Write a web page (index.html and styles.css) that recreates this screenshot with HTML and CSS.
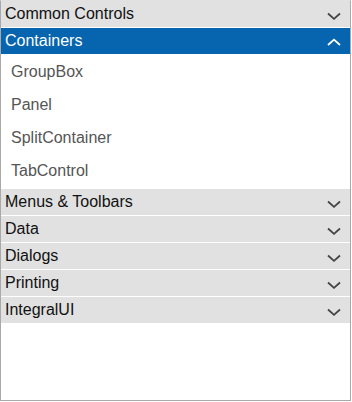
FILE: index.html
```html
<!DOCTYPE html>
<html>
<head>
<meta charset="utf-8">
<link rel="stylesheet" href="styles.css">
</head>
<body>
<div class="panel">
  <div class="group">
    <div class="header"><span>Common Controls</span><svg class="chev" width="16" height="14" viewBox="0 0 16 14"><polyline points="2,6.5 8,11.8 14,6.5"/></svg></div>
  </div>
  <div class="group open">
    <div class="header"><span>Containers</span><svg class="chev" width="16" height="14" viewBox="0 0 16 14"><polyline points="2,11 8,5.7 14,11"/></svg></div>
    <div class="content">
      <div class="item">GroupBox</div>
      <div class="item">Panel</div>
      <div class="item">SplitContainer</div>
      <div class="item">TabControl</div>
    </div>
  </div>
  <div class="group">
    <div class="header"><span>Menus &amp; Toolbars</span><svg class="chev" width="16" height="14" viewBox="0 0 16 14"><polyline points="2,6.5 8,11.8 14,6.5"/></svg></div>
  </div>
  <div class="group">
    <div class="header"><span>Data</span><svg class="chev" width="16" height="14" viewBox="0 0 16 14"><polyline points="2,6.5 8,11.8 14,6.5"/></svg></div>
  </div>
  <div class="group">
    <div class="header"><span>Dialogs</span><svg class="chev" width="16" height="14" viewBox="0 0 16 14"><polyline points="2,6.5 8,11.8 14,6.5"/></svg></div>
  </div>
  <div class="group">
    <div class="header"><span>Printing</span><svg class="chev" width="16" height="14" viewBox="0 0 16 14"><polyline points="2,6.5 8,11.8 14,6.5"/></svg></div>
  </div>
  <div class="group">
    <div class="header"><span>IntegralUI</span><svg class="chev" width="16" height="14" viewBox="0 0 16 14"><polyline points="2,6.5 8,11.8 14,6.5"/></svg></div>
  </div>
</div>
</body>
</html>
```

FILE: styles.css
```css
html, body {
  margin: 0;
  padding: 0;
  background: #ffffff;
}

.panel {
  width: 351px;
  height: 401px;
  box-sizing: border-box;
  border: 1px solid #a9a9a9;
  border-top: 1px solid #e1e1e1;
  background: #ffffff;
  font-family: "Liberation Sans", Arial, sans-serif;
  font-size: 16px;
  overflow: hidden;
}

.group {
  margin-bottom: 1px;
}

.header {
  height: 26px;
  display: flex;
  align-items: center;
  justify-content: space-between;
  padding: 0 8px 0 4px;
  background: #e1e1e1;
  color: #111111;
}

.chev {
  display: block;
  fill: none;
  stroke: #444444;
  stroke-width: 1.8;
}

.open .header {
  background: #0764ae;
  color: #ffffff;
}

.open .chev {
  stroke: #ffffff;
}

.content {
  padding: 1px 0;
  background: #ffffff;
}

.item {
  height: 33px;
  display: flex;
  align-items: center;
  padding-left: 10px;
  color: #555555;
}
```
